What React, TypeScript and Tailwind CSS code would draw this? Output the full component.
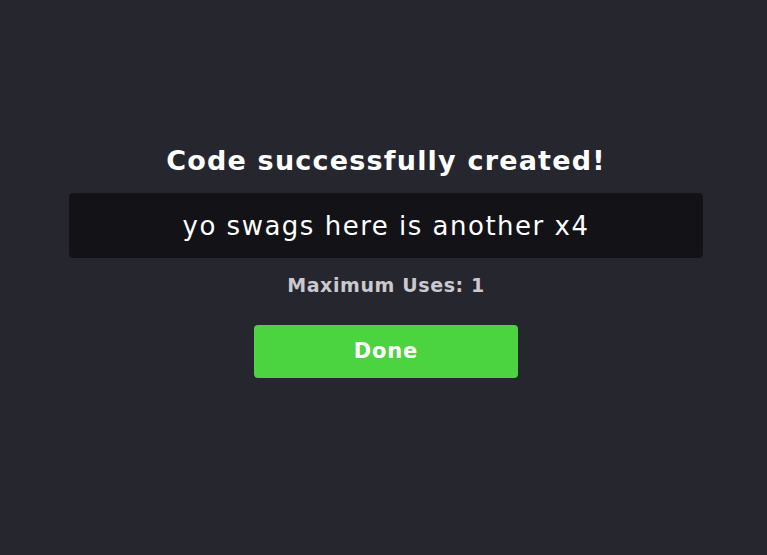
export default function App() {
  return (
    <div
      className="flex h-[555px] w-[767px] flex-col items-center bg-[#26262f] pl-[5px] pt-[142px]"
      style={{ fontFamily: '"DejaVu Sans", sans-serif' }}
    >
      <h1 className="text-[27px] font-bold leading-[37px] tracking-[1.2px] text-white">
        Code successfully created!
      </h1>
      <div className="mt-[14px] flex h-[65px] w-[634px] items-center justify-center rounded-[4px] bg-[#131317]">
        <span className="text-[26px] leading-none tracking-[1.5px] text-white">
          yo swags here is another x4
        </span>
      </div>
      <p className="mt-[14px] text-[19px] font-bold leading-[27px] tracking-[0.6px] text-[#c9c9ce]">
        Maximum Uses: 1
      </p>
      <button
        type="button"
        className="mt-[26px] flex h-[53px] w-[264px] items-center justify-center rounded-[4px] bg-[#4cd340] text-[21px] font-bold tracking-[0.8px] text-white"
      >
        Done
      </button>
    </div>
  );
}
